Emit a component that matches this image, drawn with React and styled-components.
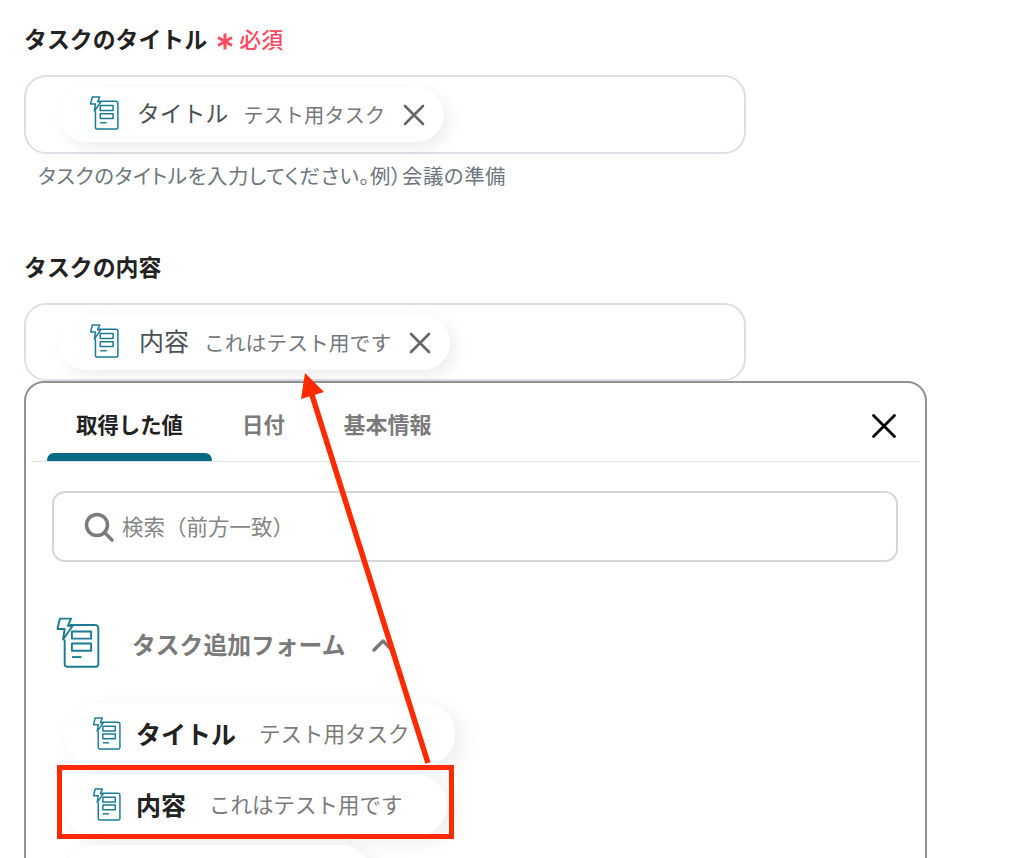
import React from "react";
import styled, { createGlobalStyle } from "styled-components";

const GlobalStyle = createGlobalStyle`
  html, body {
    margin: 0;
    height: 858px;
    overflow: hidden;
    background: #fff;
    font-family: "Noto Sans CJK JP", "Noto Sans", sans-serif;
  }
`;

const Page = styled.div`
  position: relative;
  height: 858px;
  overflow: hidden;
  padding: 24px 0 0 24px;
  box-sizing: border-box;
`;
const Label = styled.div`
  display: flex;
  align-items: center;
  height: 32px;
  padding-bottom: 3px;
  box-sizing: border-box;
  font-size: 22.9px;
  font-weight: 700;
  color: #222;
  line-height: 29px;
`;
const Required = styled.span`
  display: flex;
  align-items: center;
  margin-left: 9px;
  font-size: 22px;
  font-weight: 500;
  color: #ff4b5f;
`;
const Star = styled.svg`
  width: 18px;
  height: 19px;
  margin: 5px 5px 0 0;
`;
const InputBox = styled.div`
  width: 722px;
  height: ${(p) => p.$h}px;
  margin-top: ${(p) => p.$mt}px;
  box-sizing: border-box;
  border: 2px solid #dcdfe5;
  border-radius: 22px;
  padding: 10px 0 0 33px;
`;
const Chip = styled.div`
  display: inline-flex;
  align-items: center;
  height: 55px;
  padding: 0 18px 0 30px;
  box-sizing: border-box;
  background: #fff;
  border-radius: 28px;
  box-shadow: 6px 6px 16px rgba(0, 0, 0, 0.07);
`;
const ChipName = styled.span`
  font-size: ${(p) => p.$fs}px;
  color: #4a4f55;
  margin-left: ${(p) => p.$ml}px;
  padding-bottom: ${(p) => p.$pb}px;
`;
const ChipValue = styled.span`
  font-size: ${(p) => p.$fs}px;
  color: #74787d;
  margin-left: ${(p) => p.$ml}px;
  padding-bottom: 1px;
`;
const ChipClose = styled.svg`
  width: 24px;
  height: 24px;
  margin-left: 17px;
`;
const Hint = styled.div`
  margin: 7px 0 0 14px;
  font-size: 20.4px;
  font-feature-settings: "palt";
  letter-spacing: 0.6px;
  line-height: 28px;
  color: #6d757d;
  white-space: nowrap;
`;
const SecondLabel = styled(Label)`
  margin-top: 63px;
`;
const Panel = styled.div`
  width: 903px;
  height: 600px;
  box-sizing: border-box;
  border: 2px solid #929292;
  border-radius: 20px;
  padding: 0 5px;
  background: #fff;
`;
const TabBar = styled.div`
  display: flex;
  align-items: flex-end;
  height: 78px;
  border-bottom: 1px solid #e3e3e3;
  position: relative;
  padding-left: 16px;
`;
const Tab = styled.div`
  position: relative;
  width: ${(p) => p.$w}px;
  height: 100%;
  display: flex;
  align-items: center;
  justify-content: center;
  padding-top: 2px;
  box-sizing: border-box;
  font-size: ${(p) => p.$fs}px;
  font-weight: 700;
  color: ${(p) => (p.$active ? "#222" : "#7b7b7b")};
  ${(p) =>
    p.$active &&
    `&::after {
      content: "";
      position: absolute;
      left: 0;
      right: 0;
      bottom: 0;
      height: 8px;
      background: #066a85;
      border-radius: 7px 7px 0 0;
    }`}
`;
const CloseButton = styled.svg`
  position: absolute;
  right: 22px;
  top: 29px;
  width: 28px;
  height: 28px;
`;
const Search = styled.div`
  display: flex;
  align-items: center;
  width: 846px;
  height: 71px;
  margin: 29px 0 0 21px;
  padding: 0 0 2px 30px;
  box-sizing: border-box;
  border: 2px solid #d6d6d6;
  border-radius: 13px;
  font-size: 21.5px;
  color: #858585;
`;
const SearchIcon = styled.svg`
  width: 30px;
  height: 30px;
  margin: 2px 8px 0 0;
`;
const Section = styled.div`
  display: flex;
  align-items: center;
  margin: 55px 0 0 24px;
  height: 54px;
`;
const SectionTitle = styled.div`
  margin-left: 32px;
  padding-bottom: 2px;
  font-size: 23.8px;
  font-weight: 700;
  color: #7a7a7a;
`;
const Chevron = styled.svg`
  width: 24px;
  height: 14px;
  margin: 2px 0 0 26px;
`;
const List = styled.div`
  display: flex;
  flex-direction: column;
  align-items: flex-start;
  gap: 9px;
  margin: 32px 0 0 33px;
`;
const ListChip = styled.div`
  display: flex;
  align-items: center;
  width: ${(p) => p.$w}px;
  height: ${(p) => p.$h}px;
  padding-left: 28px;
  box-sizing: border-box;
  border-radius: 31px;
  background: #fff;
  box-shadow: 8px 6px 20px rgba(0, 0, 0, 0.07);
`;
const ListName = styled.span`
  margin-left: 15px;
  padding-bottom: 4px;
  font-size: 25px;
  font-weight: 700;
  color: #222;
`;
const ListValue = styled.span`
  margin-left: ${(p) => p.$ml}px;
  padding-bottom: 4px;
  font-size: 21.5px;
  color: #7a7a7a;
`;
const Annotation = styled.svg`
  position: absolute;
  left: 0;
  top: 0;
  width: 1024px;
  height: 858px;
  pointer-events: none;
`;
const IconSvg = styled.svg`
  flex: none;
  margin-bottom: 2px;
`;

const FormIcon = ({ size = 32, stroke = 1.4 }) => (
  <IconSvg width={size} height={size * 1.14} viewBox="0 0 28 32" fill="none">
    <g stroke="#1b7b94" strokeWidth={stroke} strokeLinejoin="round">
      <path d="M9 5h16a2 2 0 0 1 2 2v22.5a1.5 1.5 0 0 1-1.5 1.5H7.5A1.5 1.5 0 0 1 6 29.500V14" />
      <path d="M3 1h7L8 5.500h3L5 14l1-6.500H1.500z" fill="#fff" />
      <rect x="10.500" y="9" width="12" height="4.500" />
      <rect x="10.500" y="16.500" width="12" height="4.500" />
      <path d="M10.500 25h6" />
    </g>
  </IconSvg>
);

const Cross = ({ color, width }) => (
  <path d="M3 3l18 18M21 3L3 21" stroke={color} strokeWidth={width} strokeLinecap="round" />
);

export default function App() {
  return (
    <Page>
      <GlobalStyle />
      <Label>
        タスクのタイトル
        <Required>
          <Star viewBox="0 0 18 19" fill="none">
            <path d="M9 1.500v16M2 5.500l14 8M16 5.500l-14 8" stroke="#ff4b5f" strokeWidth="3" />
          </Star>
          必須
        </Required>
      </Label>
      <InputBox $h={79} $mt={19}>
        <Chip>
          <FormIcon size={30} />
          <ChipName $fs={22.8} $ml={18} $pb={4}>タイトル</ChipName>
          <ChipValue $fs={20.3} $ml={15}>テスト用タスク</ChipValue>
          <ChipClose viewBox="0 0 24 24"><Cross color="#666" width="2.6" /></ChipClose>
        </Chip>
      </InputBox>
      <Hint>タスクのタイトルを入力してください。例）会議の準備</Hint>
      <SecondLabel>タスクの内容</SecondLabel>
      <InputBox $h={78} $mt={19}>
        <Chip>
          <FormIcon size={30} />
          <ChipName $fs={25} $ml={20} $pb={5}>内容</ChipName>
          <ChipValue $fs={20.8} $ml={15}>これはテスト用です</ChipValue>
          <ChipClose viewBox="0 0 24 24"><Cross color="#666" width="2.6" /></ChipClose>
        </Chip>
      </InputBox>
      <Panel>
        <TabBar>
          <Tab $active $w={165} $fs={21.4}>取得した値</Tab>
          <Tab $w={103} $fs={21.4}>日付</Tab>
          <Tab $w={145} $fs={22}>基本情報</Tab>
          <CloseButton viewBox="0 0 24 24"><Cross color="#000" width="2.4" /></CloseButton>
        </TabBar>
        <Search>
          <SearchIcon viewBox="0 0 30 30" fill="none">
            <circle cx="13" cy="13" r="10.500" stroke="#7a7a7a" strokeWidth="3.500" />
            <path d="M21 21l7 7" stroke="#7a7a7a" strokeWidth="3.500" strokeLinecap="round" />
          </SearchIcon>
          検索（前方一致）
        </Search>
        <Section>
          <FormIcon size={45} stroke={1.2} />
          <SectionTitle>タスク追加フォーム</SectionTitle>
          <Chevron viewBox="0 0 24 14" fill="none">
            <path d="M3 12l9-9 9 9" stroke="#7a7a7a" strokeWidth="3.500" strokeLinecap="round" strokeLinejoin="round" />
          </Chevron>
        </Section>
        <List>
          <ListChip $w={391} $h={63}>
            <FormIcon size={29} />
            <ListName>タイトル</ListName>
            <ListValue $ml={23}>テスト用タスク</ListValue>
          </ListChip>
          <ListChip $w={383} $h={61}>
            <FormIcon size={29} />
            <ListName>内容</ListName>
            <ListValue $ml={23}>これはテスト用です</ListValue>
          </ListChip>
          <ListChip $w={307} $h={62} />
        </List>
      </Panel>
      <Annotation viewBox="0 0 1024 858" fill="none">
        <rect x="59.500" y="767.500" width="392" height="69" stroke="#ff2a00" strokeWidth="5" />
        <path d="M428 763L312 395" stroke="#ff2a00" strokeWidth="5.500" />
        <path d="M305 373L301 399L324 392z" fill="#ff2a00" />
      </Annotation>
    </Page>
  );
}
